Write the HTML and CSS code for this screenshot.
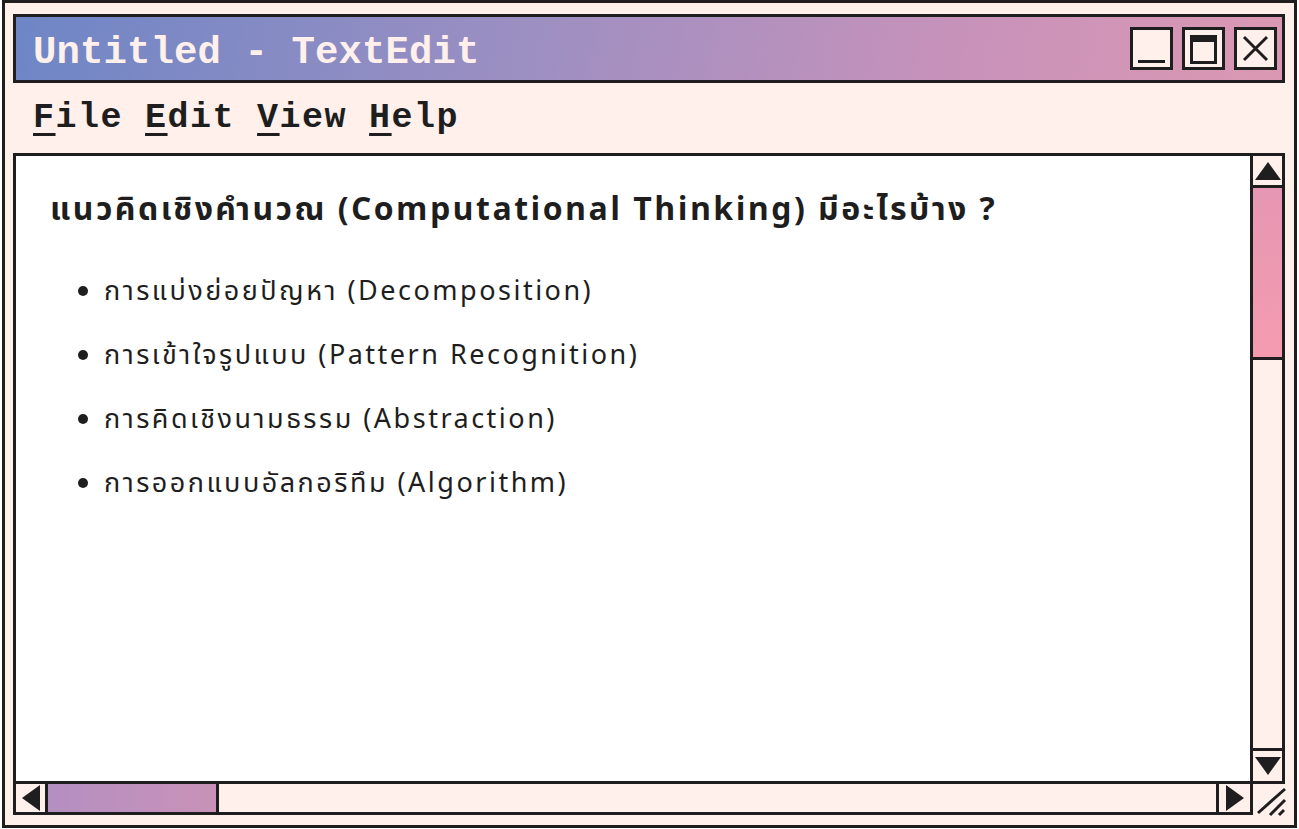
FILE: index.html
```html
<!DOCTYPE html>
<html lang="th">
<head>
<meta charset="utf-8">
<title>Untitled - TextEdit</title>
<link rel="stylesheet" href="styles.css">
</head>
<body>
<div class="window">
  <div class="titlebar">
    <div class="title">Untitled - TextEdit</div>
    <div class="controls">
      <div class="ctl">
        <svg width="37" height="37" viewBox="0 0 37 37"><rect x="5" y="30" width="27" height="3" fill="#1e1e1e"/></svg>
      </div>
      <div class="ctl">
        <svg width="37" height="37" viewBox="0 0 37 37"><rect x="6.5" y="6.5" width="24" height="26" fill="none" stroke="#1e1e1e" stroke-width="3"/><rect x="5" y="5" width="27" height="7" fill="#1e1e1e"/></svg>
      </div>
      <div class="ctl">
        <svg width="37" height="37" viewBox="0 0 37 37"><path d="M7 7 L30 30 M30 7 L7 30" stroke="#1e1e1e" stroke-width="3"/></svg>
      </div>
    </div>
  </div>
  <div class="menubar">
    <span class="menu"><u>F</u>ile</span>
    <span class="menu"><u>E</u>dit</span>
    <span class="menu"><u>V</u>iew</span>
    <span class="menu"><u>H</u>elp</span>
  </div>
  <div class="frame">
    <div class="doc">
      <h1 class="heading">แนวคิดเชิงคำนวณ (Computational Thinking) มีอะไรบ้าง ?</h1>
      <ul class="list">
        <li>การแบ่งย่อยปัญหา (Decomposition)</li>
        <li>การเข้าใจรูปแบบ (Pattern Recognition)</li>
        <li>การคิดเชิงนามธรรม (Abstraction)</li>
        <li>การออกแบบอัลกอริทึม (Algorithm)</li>
      </ul>
    </div>
    <div class="vscroll">
      <div class="vbtn up"><svg width="26" height="18" viewBox="0 0 26 18"><path d="M13 0 L26 18 L0 18 Z" fill="#1e1e1e"/></svg></div>
      <div class="vthumb"></div>
      <div class="vtrack"></div>
      <div class="vbtn down"><svg width="26" height="18" viewBox="0 0 26 18"><path d="M0 0 L26 0 L13 18 Z" fill="#1e1e1e"/></svg></div>
    </div>
    <div class="hscroll">
      <div class="hbtn left"><svg width="18" height="26" viewBox="0 0 18 26"><path d="M18 0 L18 26 L0 13 Z" fill="#1e1e1e"/></svg></div>
      <div class="hthumb"></div>
      <div class="htrack"></div>
      <div class="hbtn right"><svg width="18" height="26" viewBox="0 0 18 26"><path d="M0 0 L18 13 L0 26 Z" fill="#1e1e1e"/></svg></div>
    </div>
    <div class="corner">
      <svg class="grip" width="35" height="34" viewBox="0 0 35 34"><path d="M8 32 L35 8 M20 34 L35 19 M29 34 L34 29" stroke="#1e1e1e" stroke-width="3"/></svg>
    </div>
  </div>
</div>
</body>
</html>
```

FILE: styles.css
```css
* { box-sizing: border-box; }
html, body {
  margin: 0;
  padding: 0;
  background: #ffffff;
}
body {
  width: 1299px;
  height: 829px;
  overflow: hidden;
}
.window {
  margin-left: 2px;
  width: 1295px;
  height: 828px;
  border: 3px solid #1e1e1e;
  background: #fff0ec;
  padding: 11px 9px 10px 8px;
  display: flex;
  flex-direction: column;
}
.titlebar {
  height: 69px;
  border: 3px solid #1e1e1e;
  background: linear-gradient(100deg, #6e86c6 0%, #9c8fc2 40%, #c892ba 75%, #db98b2 100%);
  display: flex;
  align-items: center;
  justify-content: space-between;
  padding: 0 5px 0 17px;
}
.title {
  font-family: "Liberation Mono", "Courier New", monospace;
  font-weight: bold;
  font-size: 39px;
  letter-spacing: 0.1px;
  color: #fff0ec;
  line-height: 1;
  padding-top: 9px;
}
.controls {
  display: flex;
  gap: 9px;
}
.ctl {
  width: 43px;
  height: 43px;
  border: 3px solid #1e1e1e;
  background: #fff0ec;
}
.ctl svg { display: block; }
.menubar {
  height: 70px;
  display: flex;
  align-items: center;
  padding-left: 20px;
  gap: 22px;
  font-family: "Liberation Mono", "Courier New", monospace;
  font-weight: bold;
  font-size: 35px;
  letter-spacing: 1.5px;
  color: #1e1e1e;
}
.menu u {
  text-decoration-thickness: 3px;
  text-underline-offset: 6px;
}
.frame {
  flex: 1;
  display: grid;
  grid-template-columns: 1fr 35px;
  grid-template-rows: 1fr 34px;
}
.doc {
  border-left: 3px solid #1e1e1e;
  border-top: 3px solid #1e1e1e;
  background: #ffffff;
  padding: 34px 0 0 34px;
  font-family: "Noto Sans Thai", "Noto Sans", "Loma", sans-serif;
  color: #1e1e1e;
}
.heading {
  margin: 0;
  font-size: 32px;
  font-weight: bold;
  line-height: 40px;
  letter-spacing: 2.45px;
}
.list {
  margin: 30px 0 0 0;
  padding-left: 54px;
  font-size: 27px;
  line-height: 64px;
  letter-spacing: 2.5px;
}
.vscroll {
  border: 3px solid #1e1e1e;
  margin-bottom: -3px;
  display: flex;
  flex-direction: column;
  background: #fff0ec;
  position: relative;
  z-index: 1;
}
.vbtn {
  height: 32px;
  display: flex;
  align-items: center;
  justify-content: center;
}
.vbtn.up { border-bottom: 3px solid #1e1e1e; }
.vbtn.down { border-top: 3px solid #1e1e1e; height: 33px; }
.vthumb {
  height: 172px;
  border-bottom: 3px solid #1e1e1e;
  background: linear-gradient(180deg, #e597b3, #f59bb0);
}
.vtrack { flex: 1; }
.hscroll {
  border: 3px solid #1e1e1e;
  margin-right: -3px;
  display: flex;
  background: #fff0ec;
}
.hbtn {
  width: 32px;
  display: flex;
  align-items: center;
  justify-content: center;
}
.hbtn.left { border-right: 3px solid #1e1e1e; }
.hbtn.right { border-left: 3px solid #1e1e1e; width: 34px; }
.hthumb {
  width: 171px;
  border-right: 3px solid #1e1e1e;
  background: linear-gradient(90deg, #b48fc1, #c992b8);
}
.htrack { flex: 1; }
.corner {
  display: flex;
  align-items: flex-end;
  justify-content: flex-end;
}
.grip { display: block; overflow: visible; }
```
